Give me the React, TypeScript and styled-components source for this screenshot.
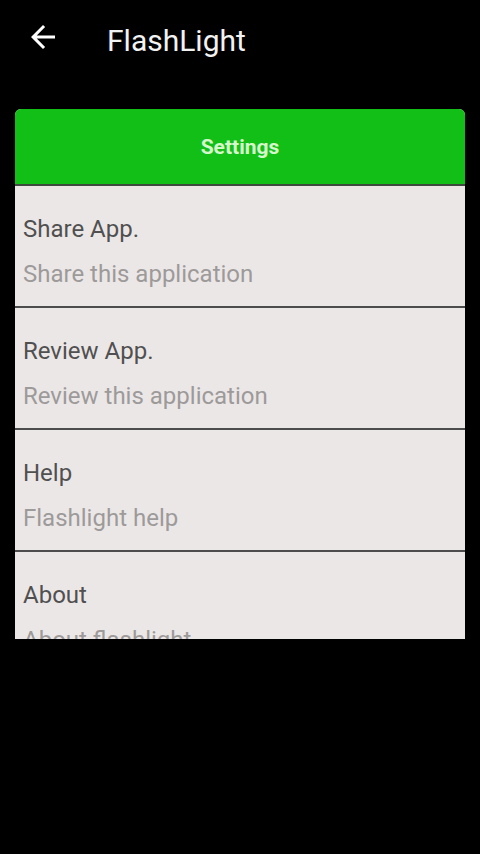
import React from "react";
import styled, { createGlobalStyle } from "styled-components";

const GlobalStyle = createGlobalStyle`
  html, body {
    margin: 0;
    padding: 0;
    background: #000;
  }
  body {
    width: 480px;
    height: 854px;
    overflow: hidden;
    font-family: Roboto, "Noto Sans", "Liberation Sans", sans-serif;
  }
`;

const Screen = styled.div`
  width: 480px;
  height: 854px;
  background: #000;
  display: flex;
  flex-direction: column;
`;

const AppBar = styled.header`
  height: 76px;
  display: flex;
  align-items: center;
  padding-left: 25px;
  gap: 46px;
`;

const BackButton = styled.button`
  width: 36px;
  height: 36px;
  padding: 0;
  border: 0;
  background: transparent;
  color: #fff;
  display: flex;
  align-items: center;
  justify-content: center;
  margin-top: -2px;
`;

const Title = styled.h1`
  margin: 4px 0 0;
  font-size: 30px;
  font-weight: 400;
  color: #f2f2f2;
  letter-spacing: 0;
`;

const Content = styled.main`
  padding: 33px 15px 0;
`;

const Card = styled.section`
  width: 450px;
  height: 530px;
  overflow: hidden;
  border-radius: 6px 6px 0 0;
  background: #ece7e7;
  display: flex;
  flex-direction: column;
`;

const CardHeader = styled.div`
  height: 75px;
  flex-shrink: 0;
  background: #12bf17;
  border-bottom: 2px solid #3e4a3e;
  display: flex;
  align-items: center;
  justify-content: center;
  font-size: 21px;
  font-weight: 700;
  color: #d6f6cc;
`;

const Row = styled.div`
  height: 120px;
  flex-shrink: 0;
  box-sizing: content-box;
  border-bottom: 2px solid #4d4d4d;
  padding: 0 8px;
  display: flex;
  flex-direction: column;
  gap: 17px;
  padding-top: 0;
  &:last-child {
    border-bottom: 0;
  }
`;

const RowTitle = styled.div`
  margin-top: 29px;
  font-size: 24px;
  line-height: 28px;
  color: #505050;
`;

const RowSub = styled.div`
  font-size: 24px;
  line-height: 28px;
  color: #9d9a9a;
`;

const ArrowBack = () => (
  <svg width="36" height="36" viewBox="0 0 24 24" fill="currentColor">
    <path d="M20 11H7.83l5.59-5.59L12 4l-8 8 8 8 1.41-1.41L7.83 13H20v-2z" />
  </svg>
);

const items = [
  { title: "Share App.", sub: "Share this application" },
  { title: "Review App.", sub: "Review this application" },
  { title: "Help", sub: "Flashlight help" },
  { title: "About", sub: "About flashlight" },
];

export default function App() {
  return (
    <>
      <GlobalStyle />
      <Screen>
        <AppBar>
          <BackButton aria-label="Back">
            <ArrowBack />
          </BackButton>
          <Title>FlashLight</Title>
        </AppBar>
        <Content>
          <Card>
            <CardHeader>Settings</CardHeader>
            {items.map((it) => (
              <Row key={it.title}>
                <RowTitle>{it.title}</RowTitle>
                <RowSub>{it.sub}</RowSub>
              </Row>
            ))}
          </Card>
        </Content>
      </Screen>
    </>
  );
}
